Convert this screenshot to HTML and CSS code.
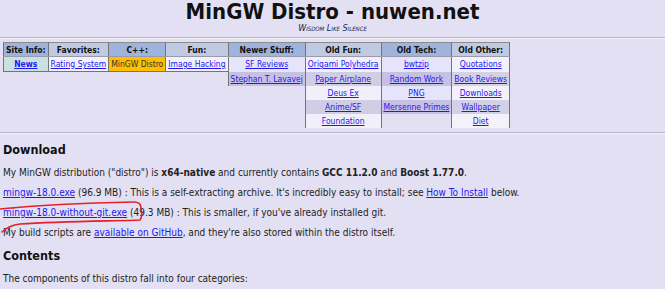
FILE: index.html
```html
<!doctype html>
<html lang="en">
  <head>
    <meta charset="UTF-8" />
    <title>MinGW Distro - nuwen.net</title>
    <link rel="stylesheet" href="styles.css">
  </head>
  <body>
    <div class="header">
      <h1>MinGW Distro - nuwen.net</h1>
      <div class="motto">Wisdom Like Silence</div>
    </div>
    <hr />

    <table class="nav">
      <tr>
        <th class="dark">Site Info:</th>
        <th class="light">Favorites:</th>
        <th class="dark">C++:</th>
        <th class="light">Fun:</th>
        <th class="dark">Newer Stuff:</th>
        <th class="light">Old Fun:</th>
        <th class="dark">Old Tech:</th>
        <th class="light">Old Other:</th>
      </tr>
      <tr>
        <td class="here"><a href="#"><b>News</b></a></td>
        <td class="pale"><a href="#">Rating System</a></td>
        <td class="current">MinGW Distro</td>
        <td class="pale"><a href="#">Image Hacking</a></td>
        <td class="tech-a"><a href="#">SF Reviews</a></td>
        <td class="fun-a"><a href="#">Origami Polyhedra</a></td>
        <td class="tech-a"><a href="#">bwtzip</a></td>
        <td class="other-a"><a href="#">Quotations</a></td>
      </tr>
      <tr>
        <td class="empty"></td>
        <td class="empty"></td>
        <td class="empty"></td>
        <td class="empty"></td>
        <td class="tech-b"><a href="#">Stephan T. Lavavej</a></td>
        <td class="fun-b"><a href="#">Paper Airplane</a></td>
        <td class="tech-b"><a href="#">Random Work</a></td>
        <td class="other-b"><a href="#">Book Reviews</a></td>
      </tr>
      <tr>
        <td class="empty"></td>
        <td class="empty"></td>
        <td class="empty"></td>
        <td class="empty"></td>
        <td class="empty"></td>
        <td class="fun-a"><a href="#">Deus Ex</a></td>
        <td class="tech-a"><a href="#">PNG</a></td>
        <td class="other-a"><a href="#">Downloads</a></td>
      </tr>
      <tr>
        <td class="empty"></td>
        <td class="empty"></td>
        <td class="empty"></td>
        <td class="empty"></td>
        <td class="empty"></td>
        <td class="fun-b"><a href="#">Anime/SF</a></td>
        <td class="tech-b"><a href="#">Mersenne Primes</a></td>
        <td class="other-b"><a href="#">Wallpaper</a></td>
      </tr>
      <tr>
        <td class="empty"></td>
        <td class="empty"></td>
        <td class="empty"></td>
        <td class="empty"></td>
        <td class="empty"></td>
        <td class="fun-a"><a href="#">Foundation</a></td>
        <td class="empty"></td>
        <td class="other-a"><a href="#">Diet</a></td>
      </tr>
    </table>
    <hr class="rule-bottom" />

    <div class="content">
      <h2>Download</h2>
      <p>My MinGW distribution ("distro") is <b>x64-native</b> and currently contains <b>GCC 11.2.0</b> and <b>Boost 1.77.0</b>.</p>
      <p><a href="#">mingw-18.0.exe</a> (96.9 MB) : This is a self-extracting archive. It's incredibly easy to install; see <a href="#">How To Install</a> below.</p>
      <p><a href="#">mingw-18.0-without-git.exe</a> (49.3 MB) : This is smaller, if you've already installed git.</p>
      <p>My build scripts are <a href="#">available on GitHub</a>, and they're also stored within the distro itself.</p>

      <h2 class="next">Contents</h2>
      <p>The components of this distro fall into four categories:</p>

      <!-- hand drawn marker around the smaller download -->
      <svg class="scribble" width="150" height="40" viewBox="0 0 150 40">
        <path d="M0 9 C30 6 85 3 134 2 C139 2 141 4 141 8 C142 13 142 18 140 20 C122 21 62 21 20 24 C12 25 6 28 2 32" />
      </svg>
    </div>
  </body>
</html>
```

FILE: styles.css
```css
body {
  margin: 0;
  padding: 0 3px;
  background: #e3e0f3;
  color: #222;
  font-family: "DejaVu Sans Condensed", "DejaVu Sans", sans-serif;
  font-size: 10px;
}

a {
  color: #2318f0;
}

.header {
  text-align: center;
}

h1 {
  margin: 0;
  padding-top: 1px;
  font-size: 22px;
  line-height: 22px;
  color: #111;
}

.motto {
  margin-top: 0;
  font-size: 9px;
  line-height: 10px;
  font-style: italic;
  font-variant: small-caps;
  color: #1c1c4c;
}

hr {
  margin: 4px -3px 3px;
  border: none;
  border-top: 1px solid #b6b3c6;
  border-bottom: 1px solid #f4f3fb;
}

hr.rule-bottom {
  margin-top: 4px;
  margin-bottom: 0;
}

.nav {
  border-collapse: collapse;
  font-size: 8.5px;
  text-align: center;
}

.nav th,
.nav td {
  height: 14px;
  padding: 0 2px;
  white-space: nowrap;
  border-left: 1px solid #747474;
  border-right: 1px solid #747474;
}

.nav th {
  height: 13px;
  border-top: 1px solid #8c8c8c;
  border-bottom: 1px solid #9a9aa8;
  color: #111;
}

.nav .dark {
  background: #9fb4dd;
}

.nav .light {
  background: #c0cbe3;
}

.nav td.empty {
  border: none;
  background: transparent;
}

.nav .here {
  background: #cbe1e1;
  border-bottom: 1px solid #747474;
}

.nav .pale {
  background: #f3f2fb;
  border-bottom: 1px solid #747474;
}

.nav .current {
  background: #ffbf00;
  color: #333;
  border-bottom: 1px solid #747474;
}

.nav .tech-a {
  background: #e6e4fa;
}

.nav .tech-b {
  background: #c6c1e4;
}

.nav .fun-a {
  background: #f1f0fa;
}

.nav .fun-b {
  background: #d1cde5;
}

.nav .other-a {
  background: #f3f2fb;
}

.nav .other-b {
  background: #d4d0e8;
}

.content {
  position: relative;
}

h2 {
  margin: 8px 0 0;
  font-size: 12.5px;
  line-height: 16px;
  color: #111;
}

h2.next {
  margin-top: 5px;
}

p {
  margin: 0;
  line-height: 20px;
}

h2 + p {
  margin-top: 5px;
}

.scribble {
  position: absolute;
  left: -3px;
  top: 58px;
  overflow: visible;
}

.scribble path {
  fill: none;
  stroke: #e5202a;
  stroke-width: 1.6;
  stroke-linecap: round;
}
```
